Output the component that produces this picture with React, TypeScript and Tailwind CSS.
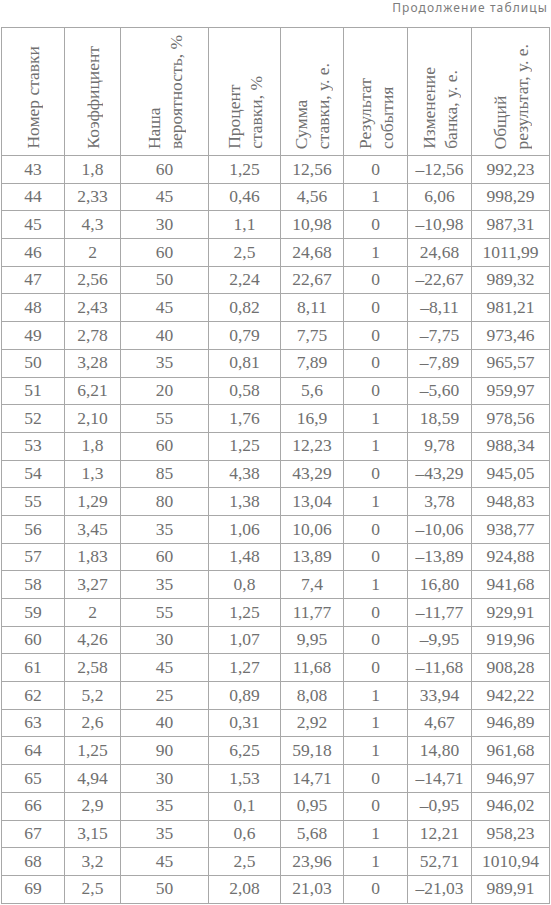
const headers: string[][] = [
  ["Номер ставки"],
  ["Коэффициент"],
  ["Наша", "вероятность, %"],
  ["Процент", "ставки, %"],
  ["Сумма", "ставки, у. е."],
  ["Результат", "события"],
  ["Изменение", "банка, у. е."],
  ["Общий", "результат, у. е."],
]

const rows: string[][] = [
  ["43", "1,8", "60", "1,25", "12,56", "0", "–12,56", "992,23"],
  ["44", "2,33", "45", "0,46", "4,56", "1", "6,06", "998,29"],
  ["45", "4,3", "30", "1,1", "10,98", "0", "–10,98", "987,31"],
  ["46", "2", "60", "2,5", "24,68", "1", "24,68", "1011,99"],
  ["47", "2,56", "50", "2,24", "22,67", "0", "–22,67", "989,32"],
  ["48", "2,43", "45", "0,82", "8,11", "0", "–8,11", "981,21"],
  ["49", "2,78", "40", "0,79", "7,75", "0", "–7,75", "973,46"],
  ["50", "3,28", "35", "0,81", "7,89", "0", "–7,89", "965,57"],
  ["51", "6,21", "20", "0,58", "5,6", "0", "–5,60", "959,97"],
  ["52", "2,10", "55", "1,76", "16,9", "1", "18,59", "978,56"],
  ["53", "1,8", "60", "1,25", "12,23", "1", "9,78", "988,34"],
  ["54", "1,3", "85", "4,38", "43,29", "0", "–43,29", "945,05"],
  ["55", "1,29", "80", "1,38", "13,04", "1", "3,78", "948,83"],
  ["56", "3,45", "35", "1,06", "10,06", "0", "–10,06", "938,77"],
  ["57", "1,83", "60", "1,48", "13,89", "0", "–13,89", "924,88"],
  ["58", "3,27", "35", "0,8", "7,4", "1", "16,80", "941,68"],
  ["59", "2", "55", "1,25", "11,77", "0", "–11,77", "929,91"],
  ["60", "4,26", "30", "1,07", "9,95", "0", "–9,95", "919,96"],
  ["61", "2,58", "45", "1,27", "11,68", "0", "–11,68", "908,28"],
  ["62", "5,2", "25", "0,89", "8,08", "1", "33,94", "942,22"],
  ["63", "2,6", "40", "0,31", "2,92", "1", "4,67", "946,89"],
  ["64", "1,25", "90", "6,25", "59,18", "1", "14,80", "961,68"],
  ["65", "4,94", "30", "1,53", "14,71", "0", "–14,71", "946,97"],
  ["66", "2,9", "35", "0,1", "0,95", "0", "–0,95", "946,02"],
  ["67", "3,15", "35", "0,6", "5,68", "1", "12,21", "958,23"],
  ["68", "3,2", "45", "2,5", "23,96", "1", "52,71", "1010,94"],
  ["69", "2,5", "50", "2,08", "21,03", "0", "–21,03", "989,91"],
]

export default function App() {
  return (
    <div className="min-h-screen w-[551px] bg-white text-[#707070]">
      <div className="flex h-[27px] justify-end pr-[3px] font-['Noto_Sans',sans-serif] text-[12px] leading-[15px] tracking-[1.1px] text-[#7c7c7c]">
        Продолжение таблицы
      </div>

      <div className="ml-[1px] grid w-[549px] grid-cols-[63px_56px_88px_72px_63px_64px_64px_78px] border-l border-t border-[#a8a8a8] font-['Liberation_Serif',serif] text-[17.5px]">
        {headers.map((lines, i) => (
          <div
            key={i}
            className="flex h-[128px] items-end justify-center border-b border-r border-[#a8a8a8] pb-[6px]"
          >
            <div className="rotate-180 leading-[22px] [writing-mode:vertical-rl]">
              {lines.map((line) => (
                <div key={line} className="whitespace-nowrap">
                  {line}
                </div>
              ))}
            </div>
          </div>
        ))}

        {rows.map((row) =>
          row.map((cell, j) => (
            <div
              key={row[0] + "-" + j}
              className="flex h-[27.7px] items-center justify-center border-b border-r border-[#a8a8a8] leading-none"
            >
              {cell}
            </div>
          ))
        )}
      </div>
    </div>
  )
}
